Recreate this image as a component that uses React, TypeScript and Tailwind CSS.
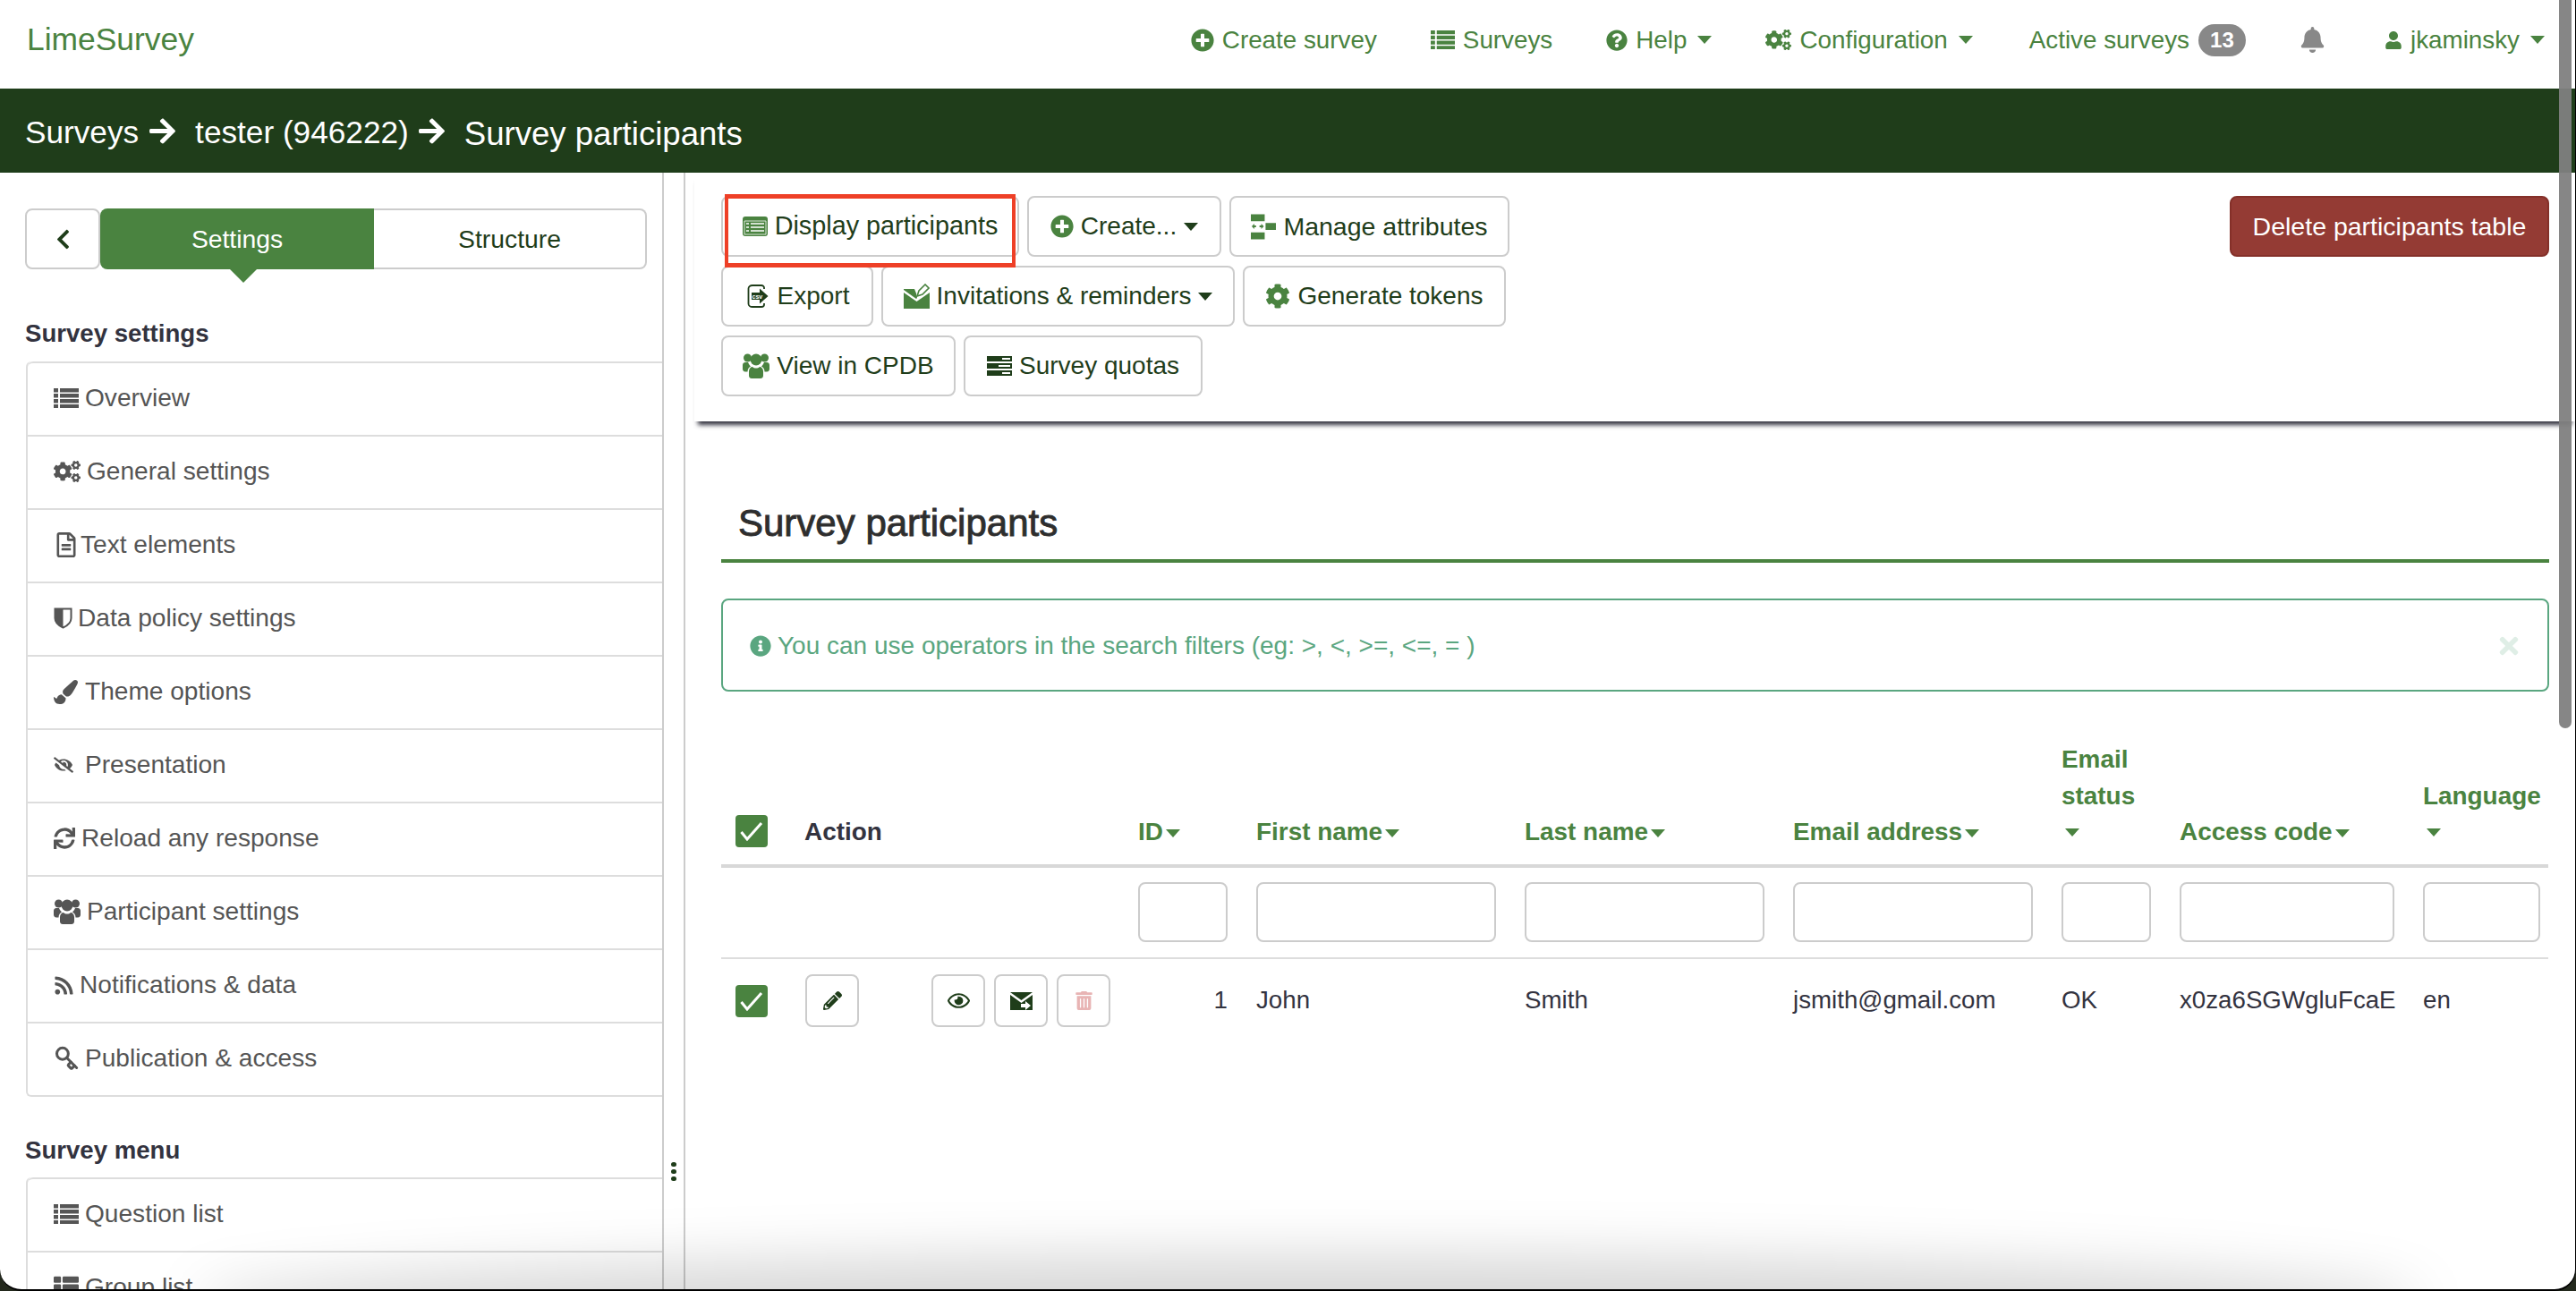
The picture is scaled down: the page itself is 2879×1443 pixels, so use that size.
import {
  FaArrowRight,
  FaBell,
  FaChevronLeft,
  FaCog,
  FaCogs,
  FaEyeSlash,
  FaInfoCircle,
  FaPaintBrush,
  FaPencilAlt,
  FaPlusCircle,
  FaQuestionCircle,
  FaRegEye,
  FaRegFileAlt,
  FaRss,
  FaSync,
  FaThList,
  FaTimes,
  FaTrashAlt,
  FaUser,
} from "react-icons/fa";
import { Key } from "lucide-react";
import type { ReactNode } from "react";

function Caret({ className = "" }: { className?: string }) {
  return (
    <span
      className={`inline-block w-0 h-0 border-l-[8px] border-r-[8px] border-t-[9px] border-l-transparent border-r-transparent border-t-current ${className}`}
    />
  );
}

// Custom icons, the app's own icon font has no match in the packages
function ListIcon({ width = 28 }: { width?: number }) {
  return (
    <svg width={width} height={width * 0.8} viewBox="0 0 28 22.400" fill="currentColor" className="shrink-0">
      <path d="M0 0h5v4.400H0zM7 0h21v4.400H7zM0 6h5v4.400H0zM7 6h21v4.400H7zM0 12h5v4.400H0zM7 12h21v4.400H7zM0 18h5v4.400H0zM7 18h21v4.400H7z" />
    </svg>
  );
}

function UsersIcon({ size = 30 }: { size?: number }) {
  return (
    <svg width={size} height={size} viewBox="0 0 30 30" fill="currentColor" className="shrink-0">
      <circle cx="5.500" cy="6" r="4.500" />
      <circle cx="24.500" cy="6" r="4.500" />
      <circle cx="15" cy="8" r="6.500" />
      <path d="M0 14c0-2 1.500-3 3-3h3c1 2.500 2 3.500 3 4.500-2 1-3.500 3-3.500 6H3c-2 0-3-1.500-3-3zM30 14c0-2-1.500-3-3-3h-3c-1 2.500-2 3.500-3 4.500 2 1 3.500 3 3.500 6H27c2 0 3-1.500 3-3z" />
      <path d="M7 21c0-3 2-5 4-5 1 1 2.500 1.500 4 1.500s3-.5 4-1.500c2 0 4 2 4 5v5c0 2-1.500 3-3 3H10c-1.500 0-3-1-3-3z" />
    </svg>
  );
}

function ShieldIcon() {
  return (
    <svg width="21" height="24" viewBox="0 0 21 24" fill="currentColor" className="shrink-0">
      <path d="M1.500 1.500h18V12c0 5-4.500 8.500-9 10.500-4.500-2-9-5.500-9-10.500z" fill="none" stroke="currentColor" strokeWidth="2" />
      <path d="M1.500 1.500h9v21c-4.500-2-9-5.500-9-10.500z" />
    </svg>
  );
}

function DisplayIcon() {
  return (
    <svg width="28" height="22" viewBox="0 0 28 22" className="shrink-0">
      <rect width="28" height="22" rx="3" fill="#4a8340" />
      <path d="M2 5h24v15H2z" fill="#4a8340" stroke="#fff" strokeWidth="0.8" />
      <path d="M9 8h15M9 12h15M9 16h15M4 8h3M4 12h3M4 16h3" stroke="#fff" strokeWidth="1.6" />
    </svg>
  );
}

function ManageIcon() {
  return (
    <svg width="28" height="29" viewBox="0 0 29 29" className="shrink-0">
      <path d="M0 0h16v8H0zM17 10h12v8H17zM0 21h16v8H0z" fill="#4a8340" />
      <path d="M1 14l3-3v2h2v2H4v2zM15 14l-3-3v2h-2v2h2v2z" fill="#4a8340" />
    </svg>
  );
}

function ExportIcon() {
  return (
    <svg width="24" height="28" viewBox="0 0 24 28" className="shrink-0 mx-[2px]">
      <path
        d="M19 6V4.500C19 3 17.500 2 16 2H6C3.500 2 1.500 3.500 1.500 5.500v17C1.500 24.500 3.500 26 6 26h10c1.500 0 3-1 3-2.500V22"
        fill="none"
        stroke="#1f3d1a"
        strokeWidth="1.800"
      />
      <path d="M5 10h9V5.500l9.500 8.500-9.500 8.500V18H5z" fill="#1f3d1a" />
      <text x="5.500" y="16.500" fontSize="7" fontWeight="700" fill="#fff" fontFamily="'Liberation Sans', sans-serif">
        csv
      </text>
    </svg>
  );
}

function InviteIcon() {
  return (
    <svg width="29" height="28" viewBox="0 0 29 28" className="shrink-0">
      <path d="M0 10l14.500 10L29 10v18H0z" fill="#4a8340" />
      <path d="M0 6h12l2 5 1 5-1 1L0 7z" fill="#4a8340" />
      <path d="M15 14l2-6 7-7 4 4-7 7z" fill="#fff" stroke="#4a8340" strokeWidth="1.600" />
    </svg>
  );
}

function QuotasIcon() {
  return (
    <svg width="28" height="22" viewBox="0 0 28 22" className="shrink-0">
      <path d="M0 0h28v6H0zM0 8h28v6H0zM0 16h28v6H0z" fill="#1f3d1a" />
      <path d="M17 2h9v2h-9zM13 10h13v2H13zM17 18h9v2h-9z" fill="#fff" />
    </svg>
  );
}

function MailIcon() {
  return (
    <svg width="25" height="20" viewBox="0 0 25 20">
      <path d="M0 0h25L12.500 9z" fill="#1f3d1a" />
      <path d="M0 3l12.500 9L25 3v17H0z" fill="#1f3d1a" />
      <path d="M12 13h5v-3l6 5-6 5v-3h-5z" fill="#fff" />
    </svg>
  );
}

function CheckBox() {
  return (
    <span className="flex items-center justify-center w-[36px] h-[36px] rounded-[4px] bg-[#4a8340]">
      <svg width="26" height="22" viewBox="0 0 26 22">
        <path d="M1.500 12l6.500 8L24 2" fill="none" stroke="#fff" strokeWidth="3" />
      </svg>
    </span>
  );
}

function ToolButton({
  icon,
  label,
  caret,
  className = "",
}: {
  icon: ReactNode;
  label: string;
  caret?: boolean;
  className?: string;
}) {
  return (
    <button
      className={`flex items-center justify-center gap-[8px] h-[68px] border-2 border-[#ccc] rounded-[8px] bg-white text-[#1f3d1a] whitespace-nowrap ${className}`}
    >
      {icon}
      <span>{label}</span>
      {caret && <Caret />}
    </button>
  );
}

function NavItem({ icon, label, caret }: { icon: ReactNode; label: string; caret?: boolean }) {
  return (
    <div className="flex items-center gap-[9px]">
      {icon}
      <span>{label}</span>
      {caret && <Caret className="ml-[3px]" />}
    </div>
  );
}

const settingsItems = [
  { label: "Overview", box: "w-[35px]", icon: <ListIcon /> },
  { label: "General settings", box: "w-[37px]", icon: <FaCogs size={30} /> },
  { label: "Text elements", box: "w-[30px]", icon: <FaRegFileAlt size={28} /> },
  { label: "Data policy settings", box: "w-[27px]", icon: <ShieldIcon /> },
  { label: "Theme options", box: "w-[35px]", icon: <FaPaintBrush size={27} /> },
  { label: "Presentation", box: "w-[35px]", icon: <FaEyeSlash size={22} /> },
  { label: "Reload any response", box: "w-[31px]", icon: <FaSync size={24} /> },
  { label: "Participant settings", box: "w-[37px]", icon: <UsersIcon /> },
  { label: "Notifications & data", box: "w-[29px]", icon: <FaRss size={23} /> },
  {
    label: "Publication & access",
    box: "w-[35px]",
    icon: <Key size={28} strokeWidth={2.6} className="rotate-90" />,
  },
];

const menuItems = [
  { label: "Question list", box: "w-[35px]", icon: <ListIcon /> },
  { label: "Group list", box: "w-[35px]", icon: <FaThList size={28} /> },
];

function SideList({ items }: { items: { label: string; box: string; icon: ReactNode }[] }) {
  return (
    <div className="border-l-2 border-b-2 border-[#ddd] rounded-l-[6px] text-[#555] text-[28.1px]">
      {items.map((item, i) => (
        <div
          key={item.label}
          className={`flex items-center h-[82px] pl-[29px] pb-[2px] border-t-2 border-[#ddd] ${i === 0 ? "rounded-tl-[6px]" : ""}`}
        >
          <span className={`shrink-0 ${item.box}`}>{item.icon}</span>
          <span>{item.label}</span>
        </div>
      ))}
    </div>
  );
}

const colsHead = [
  { label: "ID", w: "w-[100px]", value: "1" },
  { label: "First name", w: "w-[268px]", value: "John" },
  { label: "Last name", w: "w-[268px]", value: "Smith" },
  { label: "Email address", w: "w-[268px]", value: "jsmith@gmail.com" },
  { label: "Email status", w: "w-[100px]", value: "OK", stack: true },
  { label: "Access code", w: "w-[240px]", value: "x0za6SGWgluFcaE" },
  { label: "Language", w: "w-[131px]", value: "en", stack: true },
];

function ActionButton({ children }: { children: ReactNode }) {
  return (
    <span className="flex items-center justify-center w-[60px] h-[59px] border-2 border-[#ccc] rounded-[8px] bg-white">
      {children}
    </span>
  );
}

export default function App() {
  return (
    <div className="relative w-[2879px] h-[1443px] bg-[#23291d] overflow-hidden font-['Liberation_Sans',Arial,sans-serif] text-[28px]">
      <div className="relative flex flex-col h-full rounded-b-[24px] bg-white overflow-hidden border-r border-b-2 border-black">
        {/* Top nav */}
        <nav className="flex items-center justify-between h-[99px] pb-[10px] pl-[30px] pr-[34px] text-[#4a8340] text-[27.8px] shrink-0">
          <span className="text-[35.4px]">LimeSurvey</span>
          <div className="flex items-center gap-[60px]">
            <NavItem icon={<FaPlusCircle size={26} />} label="Create survey" />
            <NavItem icon={<ListIcon width={27} />} label="Surveys" />
            <NavItem icon={<FaQuestionCircle size={24} />} label="Help" caret />
            <NavItem icon={<FaCogs size={29} />} label="Configuration" caret />
            <div className="flex items-center gap-[10px] ml-[3px]">
              <span>Active surveys</span>
              <span className="flex items-center justify-center w-[53px] h-[36px] rounded-full bg-[#888] text-white text-[24px] font-bold">
                13
              </span>
            </div>
            <FaBell size={29} className="text-[#888] mr-[6px]" />
            <NavItem icon={<FaUser size={20} />} label="jkaminsky" caret />
          </div>
        </nav>

        {/* Breadcrumb */}
        <div className="flex items-center h-[94px] pl-[28px] bg-[#1f3d1a] text-white text-[35.2px] shrink-0">
          <span className="mt-[4px]">Surveys</span>
          <FaArrowRight size={33} className="ml-[10px] mr-[20px]" />
          <span className="mt-[4px]">tester (946222)</span>
          <FaArrowRight size={33} className="ml-[9px] mr-[20px]" />
          <span className="mt-[8px] text-[36.6px]">Survey participants</span>
        </div>

        <div className="flex flex-1 min-h-0">
          {/* Sidebar */}
          <aside className="w-[740px] shrink-0 pt-[40px] pl-[28px] overflow-hidden text-[27.6px]">
            <div className="flex w-[695px] h-[68px] text-[#1f3d1a] text-[28.3px]">
              <div className="flex items-center justify-center w-[84px] border-2 border-[#ccc] rounded-[8px]">
                <FaChevronLeft size={25} />
              </div>
              <div className="relative flex items-center justify-center w-[306px] bg-[#4a8340] text-white rounded-l-[8px]">
                Settings
                <span className="absolute left-[145px] top-full w-0 h-0 border-l-[15px] border-r-[15px] border-t-[15px] border-l-transparent border-r-transparent border-t-[#4a8340]" />
              </div>
              <div className="flex items-center justify-center flex-1 border-2 border-l-0 border-[#ccc] rounded-r-[8px]">
                Structure
              </div>
            </div>
            <h4 className="mt-[52px] mb-[11px] leading-[40px] font-bold text-[#33333f]">Survey settings</h4>
            <div className="ml-[1px]">
              <SideList items={settingsItems} />
            </div>
            <h4 className="mt-[40px] mb-[10px] leading-[40px] font-bold text-[#33333f]">Survey menu</h4>
            <div className="ml-[1px]">
              <SideList items={menuItems} />
            </div>
          </aside>

          {/* Drag handle */}
          <div className="w-[26px] shrink-0 border-x-2 border-[#ccc] pt-[1106px] pl-[8px]">
            <div className="flex flex-col gap-[3px]">
              <span className="w-[6px] h-[5px] rounded-full bg-[#1f3d1a]" />
              <span className="w-[6px] h-[5px] rounded-full bg-[#1f3d1a]" />
              <span className="w-[6px] h-[5px] rounded-full bg-[#1f3d1a]" />
            </div>
          </div>

          {/* Main */}
          <main className="flex-1 min-w-0">
            <div className="flex justify-between items-start h-[278px] ml-[10px] pt-[26px] pl-[30px] pr-[29px] shadow-[0_8px_5px_-4px_#33333f]">
              <div className="flex flex-col gap-[10px]">
                <div className="flex gap-[9px]">
                  <ToolButton icon={<DisplayIcon />} label="Display participants" className="w-[333px] text-[28.8px]" />
                  <ToolButton icon={<FaPlusCircle size={26} color="#4a8340" />} label="Create..." caret className="w-[217px]" />
                  <ToolButton icon={<ManageIcon />} label="Manage attributes" className="w-[313px] text-[28.5px]" />
                </div>
                <div className="flex gap-[9px]">
                  <ToolButton icon={<ExportIcon />} label="Export" className="w-[170px]" />
                  <ToolButton icon={<InviteIcon />} label="Invitations & reminders" caret className="w-[395px]" />
                  <ToolButton icon={<FaCog size={28} color="#4a8340" />} label="Generate tokens" className="w-[294px]" />
                </div>
                <div className="flex gap-[9px]">
                  <ToolButton icon={<span className="text-[#4a8340]"><UsersIcon /></span>} label="View in CPDB" className="w-[262px]" />
                  <ToolButton icon={<QuotasIcon />} label="Survey quotas" className="w-[267px]" />
                </div>
              </div>
              <button className="h-[68px] w-[357px] rounded-[8px] border-2 border-[#843029] bg-[#943b34] text-white text-[28.5px] whitespace-nowrap">
                Delete participants table
              </button>
            </div>

            <div className="ml-[40px] mr-[29px]">
              <h3 className="mt-[89px] h-[69px] pl-[19px] leading-[50px] border-b-4 border-[#4a8340] text-[42px] text-[#2e2e2e] [-webkit-text-stroke:0.9px_#2e2e2e]">
                Survey participants
              </h3>

              <div className="flex items-center justify-between h-[104px] mt-[40px] pl-[30px] pr-[28px] pt-[2px] border-2 border-[#5aa680] rounded-[8px] text-[#5aa680]">
                <div className="flex items-center gap-[7px]">
                  <FaInfoCircle size={24} />
                  <span>You can use operators in the search filters (eg: &gt;, &lt;, &gt;=, &lt;=, = )</span>
                </div>
                <FaTimes size={30} className="text-[#dfeee6]" />
              </div>

              <table className="mt-[56px] w-[2042px] table-fixed text-[#33333f] text-[27.7px]">
                <colgroup>
                  <col className="w-[77px]" />
                  <col className="w-[373px]" />
                  <col className="w-[132px]" />
                  <col className="w-[300px]" />
                  <col className="w-[300px]" />
                  <col className="w-[300px]" />
                  <col className="w-[132px]" />
                  <col className="w-[272px]" />
                  <col className="w-[156px]" />
                </colgroup>
                <thead className="text-[27.9px]">
                  <tr className="border-b-4 border-[#d8d8d8]">
                    <th className="pl-[16px] pb-[19px] align-bottom">
                      <CheckBox />
                    </th>
                    <th className="px-[16px] pb-[15px] align-bottom text-left leading-[40.5px]">Action</th>
                    {colsHead.map((c) => (
                      <th
                        key={c.label}
                        className="px-[16px] pb-[15px] align-bottom text-left leading-[40.5px] text-[#4a8340] whitespace-normal"
                      >
                        {c.label}
                        {c.stack ? (
                          <span className="flex h-[40.5px] items-center pl-[4px]">
                            <Caret />
                          </span>
                        ) : (
                          <Caret className="ml-[3px] align-middle" />
                        )}
                      </th>
                    ))}
                  </tr>
                </thead>
                <tbody>
                  <tr className="h-[103px] border-b-2 border-[#ddd]">
                    <td />
                    <td />
                    {colsHead.map((c) => (
                      <td key={c.label} className="px-[16px] align-middle">
                        <input className={`block h-[67px] border-2 border-[#ccc] rounded-[8px] bg-white ${c.w}`} />
                      </td>
                    ))}
                  </tr>
                  <tr className="h-[95px]">
                    <td className="pl-[16px] align-middle">
                      <CheckBox />
                    </td>
                    <td className="pl-[17px] align-middle">
                      <div className="flex">
                        <ActionButton>
                          <FaPencilAlt size={21} color="#1f3d1a" />
                        </ActionButton>
                        <div className="flex gap-[10px] ml-[81px]">
                          <ActionButton>
                            <FaRegEye size={25} color="#1f3d1a" />
                          </ActionButton>
                          <ActionButton>
                            <MailIcon />
                          </ActionButton>
                          <ActionButton>
                            <FaTrashAlt size={21} color="#e8b4b4" />
                          </ActionButton>
                        </div>
                      </div>
                    </td>
                    {colsHead.map((c) => (
                      <td
                        key={c.label}
                        className={`px-[16px] pb-[2px] align-middle whitespace-nowrap ${c.label === "ID" ? "text-right" : ""}`}
                      >
                        {c.value}
                      </td>
                    ))}
                  </tr>
                </tbody>
              </table>
            </div>
          </main>
        </div>

        {/* Scrollbar thumb and the window's bottom shadow sit on top of the page */}
        <div className="absolute top-0 right-[4px] w-[14px] h-[814px] rounded-b-full bg-[#808080]/95" />
        <div className="absolute left-[220px] right-[170px] bottom-[-70px] h-[110px] rounded-[50%] bg-black/15 blur-[30px] pointer-events-none" />
      </div>

      {/* Red annotation box */}
      <div className="absolute left-[810px] top-[217px] w-[325px] h-[82px] border-x-[4px] border-y-[5px] border-[#ee4027] pointer-events-none" />
    </div>
  );
}
